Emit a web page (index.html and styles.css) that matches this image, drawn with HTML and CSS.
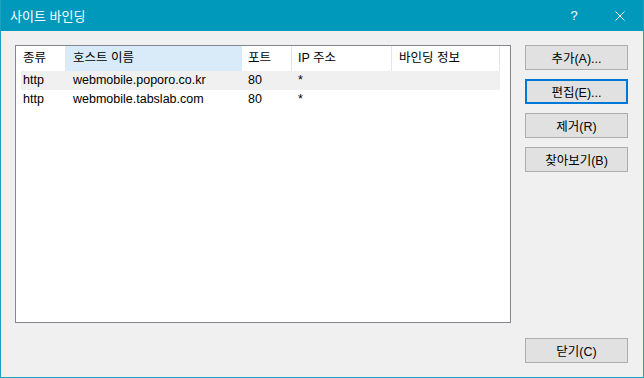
FILE: index.html
```html
<!DOCTYPE html>
<html lang="ko">
<head>
    <meta charset="UTF-8">
    <title>사이트 바인딩</title>
    <link rel="stylesheet" href="styles.css">
</head>
<body>
<div class="dialog">
    <div class="titlebar">
        <span class="title">사이트 바인딩</span>
        <span class="help">?</span>
        <span class="close">
            <svg width="10" height="10" viewBox="0 0 10 10"><path d="M0.5 0.5L9.5 9.5M9.5 0.5L0.5 9.5" stroke="#fff" stroke-width="1" fill="none"/></svg>
        </span>
    </div>
    <div class="content">
        <div class="main">
            <div class="listview">
                <div class="header">
                    <div class="col c1">종류</div>
                    <div class="col c2 sorted">호스트 이름</div>
                    <div class="col c3">포트</div>
                    <div class="col c4">IP 주소</div>
                    <div class="col c5">바인딩 정보</div>
                </div>
                <div class="row selected">
                    <div class="cell c1">http</div>
                    <div class="cell c2">webmobile.poporo.co.kr</div>
                    <div class="cell c3">80</div>
                    <div class="cell c4">*</div>
                    <div class="cell c5"></div>
                </div>
                <div class="row">
                    <div class="cell c1">http</div>
                    <div class="cell c2">webmobile.tabslab.com</div>
                    <div class="cell c3">80</div>
                    <div class="cell c4">*</div>
                    <div class="cell c5"></div>
                </div>
            </div>
            <div class="buttons">
                <button class="btn">추가(A)...</button>
                <button class="btn focus">편집(E)...</button>
                <button class="btn">제거(R)</button>
                <button class="btn">찾아보기(B)</button>
            </div>
        </div>
        <div class="footer">
            <button class="btn">닫기(C)</button>
        </div>
    </div>
</div>
</body>
</html>
```

FILE: styles.css
```css
* {
    margin: 0;
    padding: 0;
    box-sizing: border-box;
}
body {
    font-family: "Liberation Sans", "Noto Sans CJK KR", sans-serif;
    font-size: 12.5px;
    color: #000;
    background: #fff;
}
.dialog {
    width: 644px;
    height: 378px;
    border: 1px solid #1aa2c0;
    border-top: none;
    background: #f0f0f0;
    display: flex;
    flex-direction: column;
}
.titlebar {
    height: 31px;
    background: #0099bc;
    color: #fff;
    display: flex;
    align-items: center;
    padding-left: 9px;
}
.title {
    flex: 1;
    font-size: 13px;
}
.help {
    width: 46px;
    text-align: center;
    font-size: 13px;
}
.close {
    width: 46px;
    display: flex;
    justify-content: center;
}
.content {
    flex: 1;
    padding: 14px 15px 14px 14px;
    display: flex;
    flex-direction: column;
}
.main {
    display: flex;
}
.listview {
    width: 496px;
    height: 278px;
    background: #fff;
    border: 1px solid #828790;
}
.header {
    display: flex;
    height: 25px;
}
.col {
    height: 25px;
    line-height: 24px;
    padding-left: 6px;
    border-right: 1px solid #e5e5e5;
}
.sorted {
    background: #d9ebf9;
    border-right-color: #d9ebf9;
}
.c1 { width: 50px; padding-left: 7px; }
.c2 { width: 176px; padding-left: 7px; }
.c3 { width: 50px; }
.c4 { width: 100px; }
.c5 { width: 108px; padding-left: 7px; }
.row {
    display: flex;
    height: 19px;
    line-height: 19px;
    width: 484px;
}
.row.selected {
    background: linear-gradient(to right, #fff 5px, #f0f0f0 5px);
}
.cell {
    white-space: nowrap;
    padding-left: 6px;
}
.cell.c1, .cell.c2 { padding-left: 7px; }
.buttons {
    margin-left: 14px;
    display: flex;
    flex-direction: column;
    gap: 9px;
}
.btn {
    width: 103px;
    height: 25px;
    background: #e1e1e1;
    border: 1px solid #adadad;
    font-family: "Liberation Sans", "Noto Sans CJK KR", sans-serif;
    font-size: 12.5px;
    color: #000;
}
.btn.focus {
    border: 2px solid #0078d7;
}
.footer {
    margin-top: auto;
    display: flex;
    justify-content: flex-end;
}
```
